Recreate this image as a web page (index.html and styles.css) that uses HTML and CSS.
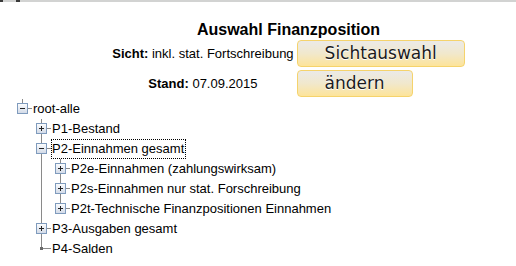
FILE: index.html
```html
<!DOCTYPE html>
<html lang="de">
<head>
    <meta charset="UTF-8">
    <title>Auswahl Finanzposition</title>
    <link rel="stylesheet" href="styles.css">
</head>
<body>
    <div class="topbar">
        <span class="grip"></span><span class="bar short"></span><span class="grip wide"></span><span class="bar"></span>
    </div>

    <div class="panel">
        <h1>Auswahl Finanzposition</h1>
        <div class="choice-grid">
            <div class="info"><b>Sicht:</b> inkl. stat. Fortschreibung</div>
            <div><button class="btn">Sichtauswahl</button></div>
            <div class="info"><b>Stand:</b> 07.09.2015</div>
            <div><button class="btn">ändern</button></div>
        </div>
    </div>

    <div class="tree">
        <div class="row">
            <span class="cell top-elbow"><span class="box"><svg width="9" height="9"><path d="M2 4.5h5" stroke="#222"/></svg></span></span>
            <span class="label">root-alle</span>
        </div>
        <div class="row">
            <span class="cell"></span>
            <span class="cell tee"><span class="box"><svg width="9" height="9"><path d="M2 4.5h5M4.5 2v5" stroke="#222"/></svg></span></span>
            <span class="label">P1-Bestand</span>
        </div>
        <div class="row">
            <span class="cell"></span>
            <span class="cell tee"><span class="box"><svg width="9" height="9"><path d="M2 4.5h5" stroke="#222"/></svg></span></span>
            <span class="label focused">P2-Einnahmen gesamt</span>
        </div>
        <div class="row">
            <span class="cell"></span>
            <span class="cell line"></span>
            <span class="cell tee"><span class="box"><svg width="9" height="9"><path d="M2 4.5h5M4.5 2v5" stroke="#222"/></svg></span></span>
            <span class="label">P2e-Einnahmen (zahlungswirksam)</span>
        </div>
        <div class="row">
            <span class="cell"></span>
            <span class="cell line"></span>
            <span class="cell tee"><span class="box"><svg width="9" height="9"><path d="M2 4.5h5M4.5 2v5" stroke="#222"/></svg></span></span>
            <span class="label">P2s-Einnahmen nur stat. Forschreibung</span>
        </div>
        <div class="row">
            <span class="cell"></span>
            <span class="cell line"></span>
            <span class="cell end"><span class="box"><svg width="9" height="9"><path d="M2 4.5h5M4.5 2v5" stroke="#222"/></svg></span></span>
            <span class="label">P2t-Technische Finanzpositionen Einnahmen</span>
        </div>
        <div class="row">
            <span class="cell"></span>
            <span class="cell tee"><span class="box"><svg width="9" height="9"><path d="M2 4.5h5M4.5 2v5" stroke="#222"/></svg></span></span>
            <span class="label">P3-Ausgaben gesamt</span>
        </div>
        <div class="row">
            <span class="cell"></span>
            <span class="cell end"><span class="dot"></span></span>
            <span class="label">P4-Salden</span>
        </div>
    </div>
</body>
</html>
```

FILE: styles.css
```css
body {
    margin: 0;
    background: #fff;
    color: #000;
    font-family: "Liberation Sans", Arial, sans-serif;
    font-size: 13px;
}

.topbar {
    display: flex;
    height: 2px;
}
.topbar .bar {
    flex: 1;
    background: #d2d3d2;
}
.topbar .bar.short {
    flex: none;
    width: 13px;
}
.topbar .grip {
    width: 3px;
    background: #3a3a3a;
}
.topbar .grip.wide {
    width: 4px;
}

.panel {
    margin-left: 61px;
    display: flex;
    flex-direction: column;
    align-items: center;
}

.panel h1 {
    font-size: 16px;
    line-height: 18px;
    font-weight: bold;
    margin: 19px 0 1px 0;
}

.choice-grid {
    display: grid;
    grid-template-columns: auto auto;
    column-gap: 3px;
    row-gap: 3px;
    align-items: center;
}

.info {
    text-align: center;
}

.btn {
    height: 27px;
    box-sizing: border-box;
    padding: 0 27px;
    margin: 0;
    display: block;
    font-family: "DejaVu Sans", sans-serif;
    font-size: 17px;
    line-height: 25px;
    color: #1b1b1b;
    text-shadow: 0 1px 0 #fff, 0 0 1px #fff;
    border: 1px solid #f5d36c;
    border-radius: 4px;
    background: linear-gradient(to bottom, #ebeae8, #f1e8cc 50%, #fde49a);
}

/* tree */
.tree {
    margin-top: 2px;
    padding-left: 13px;
}

.row {
    display: flex;
    height: 20px;
    align-items: center;
}

.cell {
    flex: none;
    width: 19px;
    height: 20px;
    display: flex;
    justify-content: center;
    align-items: flex-start;
}

.cell.line {
    background: linear-gradient(#8a8a8a, #8a8a8a) 9px 0 / 1px 100% no-repeat;
}
.cell.tee {
    background:
        linear-gradient(#8a8a8a, #8a8a8a) 9px 0 / 1px 100% no-repeat,
        linear-gradient(#8a8a8a, #8a8a8a) 9px 9px / 10px 1px no-repeat;
}
.cell.end,
.cell.top-elbow {
    background:
        linear-gradient(#8a8a8a, #8a8a8a) 9px 0 / 1px 10px no-repeat,
        linear-gradient(#8a8a8a, #8a8a8a) 9px 9px / 10px 1px no-repeat;
}

.box {
    width: 11px;
    height: 11px;
    box-sizing: border-box;
    margin-top: 4px;
    border: 1px solid #7f9bbd;
    background: linear-gradient(to bottom, #fbfcfd, #d3dbe8);
    display: flex;
}
.box svg {
    display: block;
}

.dot {
    width: 3px;
    height: 3px;
    margin-top: 8px;
    background: #6a6a6a;
}

.label {
    line-height: 18px;
    padding: 0 1px 0 0;
    border: 1px dotted transparent;
    white-space: nowrap;
}
.label.focused {
    border-color: #000;
}
```
